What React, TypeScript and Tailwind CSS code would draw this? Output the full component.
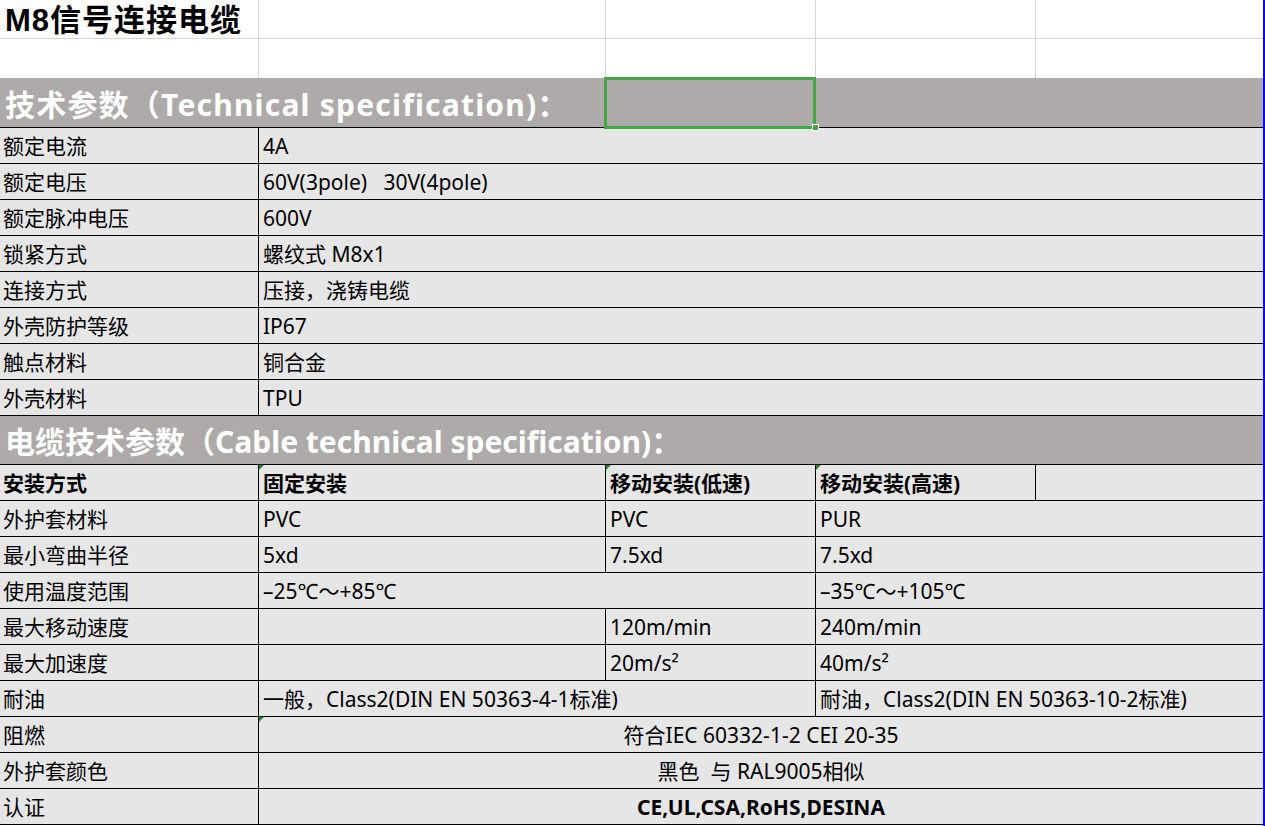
import React from "react";

// ширины колонок как в таблице: A | B | C | D | E
const COLS = "grid grid-cols-[259px_347px_210px_220px_227px]";

const specRows: [string, string][] = [
  ["额定电流", "4A"],
  ["额定电压", "60V(3pole)   30V(4pole)"],
  ["额定脉冲电压", "600V"],
  ["锁紧方式", "螺纹式 M8x1"],
  ["连接方式", "压接，浇铸电缆"],
  ["外壳防护等级", "IP67"],
  ["触点材料", "铜合金"],
  ["外壳材料", "TPU"],
];

function Mark() {
  // маленький зелёный треугольник в углу ячейки
  return (
    <span className="absolute left-0 top-0 h-0 w-0 border-r-[5px] border-t-[5px] border-r-transparent border-t-[#1f8a1f]" />
  );
}

function Cell({
  children,
  span = "",
  last = false,
  center = false,
  bold = false,
  mark = false,
}: any) {
  return (
    <div
      className={[
        "relative flex h-[36px] items-center whitespace-pre border-b border-black pt-[3px]",
        last ? "" : "border-r",
        center ? "justify-center" : "pl-[4px]",
        bold ? "font-bold" : "",
        span,
      ].join(" ")}
    >
      {mark ? <Mark /> : null}
      {children}
    </div>
  );
}

function Label({ children, bold = false }: any) {
  return (
    <div
      className={[
        "flex h-[36px] items-center border-b border-r border-black pl-[3px] pt-[3px]",
        bold ? "font-bold" : "",
      ].join(" ")}
    >
      {children}
    </div>
  );
}

function SectionHead({ text, h, extra = "" }: { text: string; h: string; extra?: string }) {
  return (
    <div
      className={`flex ${h} ${extra} items-center border-b border-black bg-[#aeaaa9] pl-[5px] pt-[3px] text-[30px] font-bold text-white`}
    >
      {text}
    </div>
  );
}

export default function App() {
  return (
    <div className="relative flex h-[826px] w-[1265px] overflow-hidden bg-white font-['Noto_Sans','Noto_Sans_CJK_SC',sans-serif] text-[21px] text-black">
      <div className="w-[1263px]">
        {/* шапка листа */}
        <div className={COLS}>
          <div className="flex h-[39px] items-center border-b border-r border-[#d4d4d4] pl-[5px] pt-[4px] font-['Liberation_Sans','Noto_Sans_CJK_SC',sans-serif] text-[31px] font-bold tracking-[1px]">
            M8信号连接电缆
          </div>
          <div className="h-[39px] border-b border-r border-[#d4d4d4]" />
          <div className="h-[39px] border-b border-r border-[#d4d4d4]" />
          <div className="h-[39px] border-b border-r border-[#d4d4d4]" />
          <div className="h-[39px] border-b border-[#d4d4d4]" />
          <div className="h-[39px] border-r border-[#d4d4d4]" />
          <div className="h-[39px] border-r border-[#d4d4d4]" />
          <div className="h-[39px] border-r border-[#d4d4d4]" />
          <div className="h-[39px] border-r border-[#d4d4d4]" />
          <div className="h-[39px]" />
        </div>

        <SectionHead
          text="技术参数（Technical specification)："
          h="h-[50px]"
          extra="tracking-[1.2px]"
        />

        <div className={`${COLS} bg-[#e6e6e6]`}>
          {specRows.map(([k, v]) => (
            <React.Fragment key={k}>
              <Label>{k}</Label>
              <Cell span="col-span-4" last>
                {v}
              </Cell>
            </React.Fragment>
          ))}
        </div>

        <SectionHead text="电缆技术参数（Cable technical specification)：" h="h-[49px]" />

        <div className={`${COLS} bg-[#e6e6e6]`}>
          <Label bold>安装方式</Label>
          <Cell bold mark>固定安装</Cell>
          <Cell bold mark>移动安装(低速)</Cell>
          <Cell bold mark>移动安装(高速)</Cell>
          <Cell last />

          <Label>外护套材料</Label>
          <Cell>PVC</Cell>
          <Cell>PVC</Cell>
          <Cell span="col-span-2" last>PUR</Cell>

          <Label>最小弯曲半径</Label>
          <Cell>5xd</Cell>
          <Cell>7.5xd</Cell>
          <Cell span="col-span-2" last>7.5xd</Cell>

          <Label>使用温度范围</Label>
          <Cell span="col-span-2">–25℃～+85℃</Cell>
          <Cell span="col-span-2" last>–35℃～+105℃</Cell>

          <Label>最大移动速度</Label>
          <Cell />
          <Cell>120m/min</Cell>
          <Cell span="col-span-2" last>240m/min</Cell>

          <Label>最大加速度</Label>
          <Cell />
          <Cell>20m/s²</Cell>
          <Cell span="col-span-2" last>40m/s²</Cell>

          <Label>耐油</Label>
          <Cell span="col-span-2">一般，Class2(DIN EN 50363-4-1标准)</Cell>
          <Cell span="col-span-2" last>耐油，Class2(DIN EN 50363-10-2标准)</Cell>

          <Label>阻燃</Label>
          <Cell span="col-span-4" last center mark>
            符合IEC 60332-1-2 CEI 20-35
          </Cell>

          <Label>外护套颜色</Label>
          <Cell span="col-span-4" last center>
            黑色  与 RAL9005相似
          </Cell>

          <Label>认证</Label>
          <Cell span="col-span-4" last center bold>
            CE,UL,CSA,RoHS,DESINA
          </Cell>
        </div>
      </div>

      {/* правый край листа */}
      <div className="w-[2px] bg-[#0a0ae6]" />

      {/* выделенная ячейка */}
      <div className="absolute left-[604px] top-[77px] h-[52px] w-[212px] border-[3px] border-[#44a546]" />
      <div className="absolute left-[812px] top-[124px] h-[7px] w-[7px] border border-white bg-[#44a546]" />
    </div>
  );
}
